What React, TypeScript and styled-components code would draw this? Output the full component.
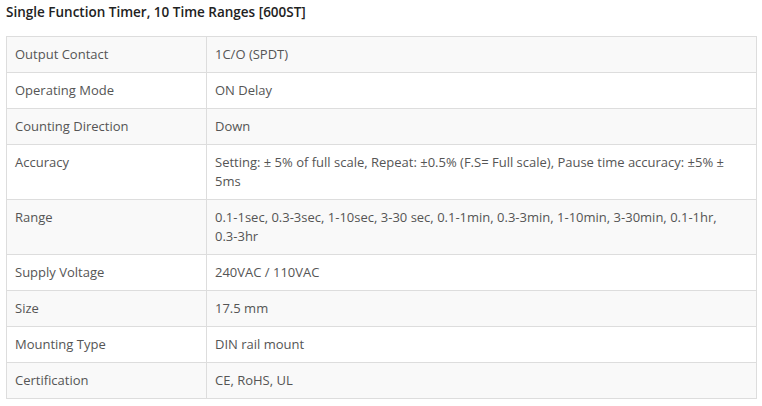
import React from "react";
import styled, { createGlobalStyle } from "styled-components";

const GlobalStyle = createGlobalStyle`
    body {
        margin: 0;
        background: #fff;
        font-family: "Open Sans", "Liberation Sans", sans-serif;
    }
`;

// value is either plain text or a list of items that must not break inside
const specs: { label: string; value: string | string[] }[] = [
    { label: "Output Contact", value: "1C/O (SPDT)" },
    { label: "Operating Mode", value: "ON Delay" },
    { label: "Counting Direction", value: "Down" },
    {
        label: "Accuracy",
        value: "Setting: ± 5% of full scale, Repeat: ±0.5% (F.S= Full scale), Pause time accuracy: ±5% ± 5ms",
    },
    {
        label: "Range",
        value: [
            "0.1-1sec",
            "0.3-3sec",
            "1-10sec",
            "3-30 sec",
            "0.1-1min",
            "0.3-3min",
            "1-10min",
            "3-30min",
            "0.1-1hr",
            "0.3-3hr",
        ],
    },
    { label: "Supply Voltage", value: "240VAC / 110VAC" },
    { label: "Size", value: "17.5 mm" },
    { label: "Mounting Type", value: "DIN rail mount" },
    { label: "Certification", value: "CE, RoHS, UL" },
];

const SpecTable = () => {
    return (
        <Wrapper>
            <Title>Single Function Timer, 10 Time Ranges [600ST]</Title>
            <Table>
                <colgroup>
                    <col style={{ width: 200 }} />
                    <col />
                </colgroup>
                <tbody>
                    {specs.map((spec, i) => (
                        <Row key={i} striped={i % 2 === 0}>
                            <Cell>{spec.label}</Cell>
                            <Cell>
                                {Array.isArray(spec.value)
                                    ? spec.value.map((item, j) => (
                                          <React.Fragment key={j}>
                                              <NoWrap>
                                                  {item}
                                                  {j < spec.value.length - 1 && ","}
                                              </NoWrap>
                                              {j < spec.value.length - 1 && " "}
                                          </React.Fragment>
                                      ))
                                    : spec.value}
                            </Cell>
                        </Row>
                    ))}
                </tbody>
            </Table>
        </Wrapper>
    );
};

const Wrapper = styled.div`
    padding: 0 6px;
    width: 751px;
`;

const Title = styled.h4`
    margin: 0;
    padding: 3px 0 0;
    height: 33px;
    font-size: 13.5px;
    font-weight: 600;
    line-height: 19px;
    color: #222;
`;

const Table = styled.table`
    width: 751px;
    border-collapse: collapse;
    table-layout: fixed;
    border: 1px solid #ddd;
`;

const Row = styled.tr<{ striped?: boolean }>`
    background: ${(props) => (props.striped ? "#f9f9f9" : "#fff")};
`;

const Cell = styled.td`
    border: 1px solid #ddd;
    padding: 8px 8px;
    font-size: 13px;
    line-height: 19px;
    color: #555;
    vertical-align: top;
    text-align: left;
`;

const NoWrap = styled.span`
    white-space: nowrap;
`;

const App = () => (
    <>
        <GlobalStyle />
        <SpecTable />
    </>
);

export default App;
